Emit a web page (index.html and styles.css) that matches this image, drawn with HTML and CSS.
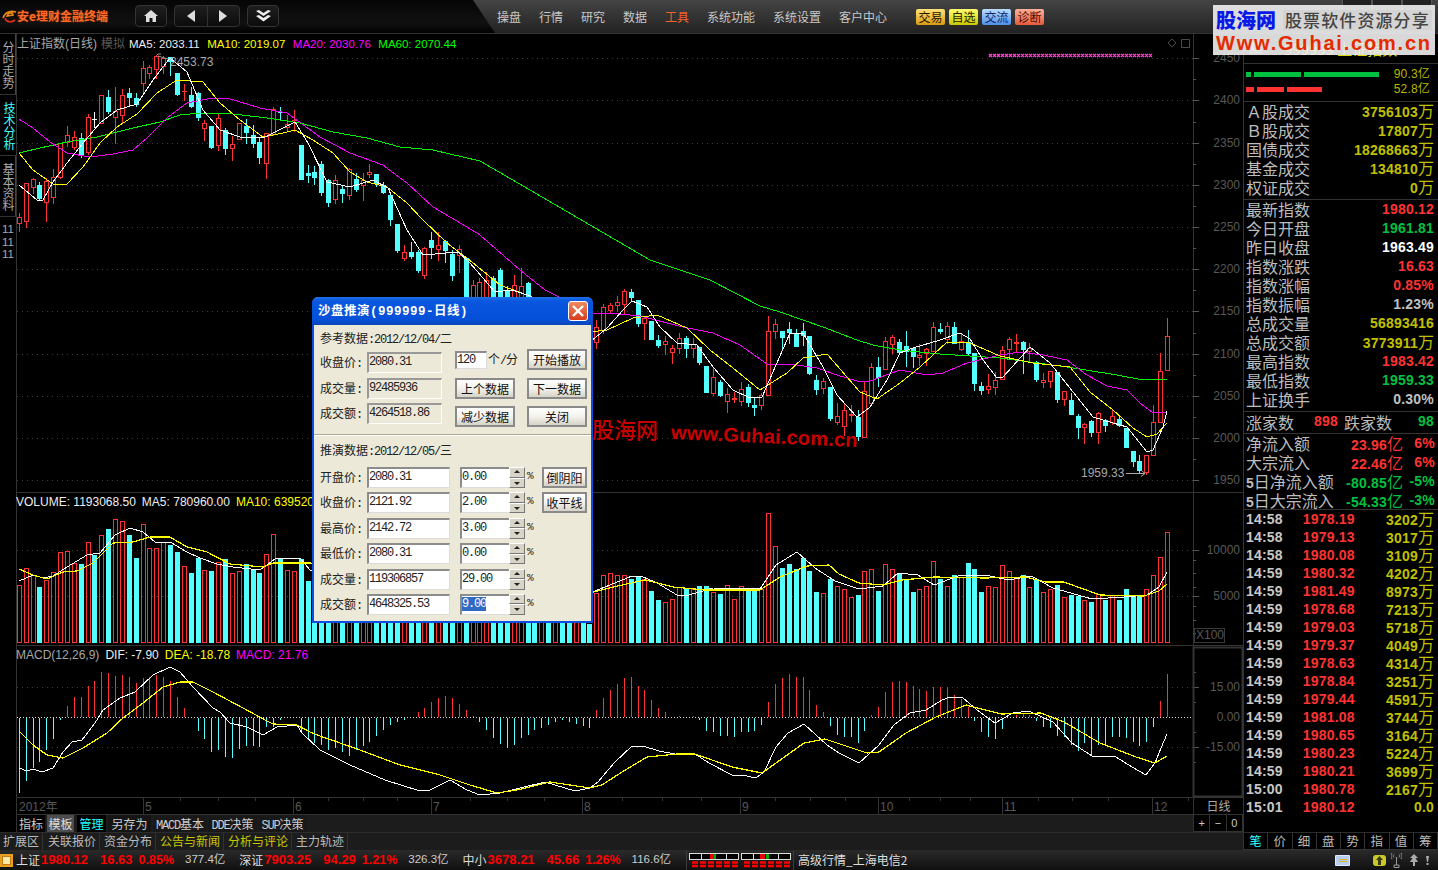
FILE: index.html
```html
<!DOCTYPE html>
<html lang="zh-CN">
<head>
<meta charset="utf-8">
<title>安e理财金融终端</title>
<link rel="stylesheet" href="styles.css">
</head>
<body>
<div class="app">
  <header class="topbar">
    <div class="brand">
      <svg class="logo-mark" viewBox="0 0 15 15" width="15" height="15"><path d="M1 9 C3 3 9 1 14 3 C10 2 6 4 5 7 L11 6 C11 4 9 4 8 4" fill="none" stroke="#e8861a" stroke-width="1.6"/><path d="M3 9 C4 13 9 14 13 11" fill="none" stroke="#e0301a" stroke-width="1.6"/></svg>
      <span class="logo-text">安e理财金融终端</span>
      <div class="tool-btn home"><svg viewBox="0 0 14 12" width="14" height="12"><path d="M7 0 L14 6 L12 6 L12 12 L8.5 12 L8.5 8 L5.5 8 L5.5 12 L2 12 L2 6 L0 6 Z" fill="#ddd"/></svg></div>
      <div class="tool-btn pager">
        <span class="pager-cell"><svg viewBox="0 0 8 12" width="8" height="12"><path d="M8 0 V12 L0 6 Z" fill="#ddd"/></svg></span>
        <span class="pager-cell"><svg viewBox="0 0 8 12" width="8" height="12"><path d="M0 0 V12 L8 6 Z" fill="#ddd"/></svg></span>
      </div>
      <div class="tool-btn chev"><svg viewBox="0 0 15 12" width="15" height="12"><path d="M0 1 L3 0 L7.5 3 L12 0 L15 1 L7.5 6 Z M0 6 L3 5 L7.5 8 L12 5 L15 6 L7.5 11.5 Z" fill="#eee"/></svg></div>
    </div>
    <nav class="menu">
      <span>操盘</span><span>行情</span><span>研究</span><span>数据</span><span class="menu-on">工具</span><span>系统功能</span><span>系统设置</span><span>客户中心</span>
    </nav>
    <div class="pills">
      <span class="pill pill-trade">交易</span><span class="pill pill-own">自选</span><span class="pill pill-talk">交流</span><span class="pill pill-diag">诊断</span>
    </div>
    <div class="win-btns"><i></i><i></i><i></i></div>
  </header>

  <main class="main">
    <aside class="side">
      <div class="side-tab">分时走势</div>
      <div class="side-tab side-on">技术分析</div>
      <div class="side-tab">基本资料</div>
      <div class="side-nums"><span>11</span><span>11</span><span>11</span></div>
    </aside>

    <section class="charts">
      <div class="panel panel-price">
        <svg id="price" class="plot" width="1226" height="458" viewBox="17 34 1226 458"></svg>
        <div class="legend legend-price">
          <span class="c-gray">上证指数(日线)</span><span class="c-dim">模拟</span>
          <span class="c-white gap">MA5: 2033.11</span><span class="c-yellow gap">MA10: 2019.07</span><span class="c-mag gap">MA20: 2030.76</span><span class="c-green gap">MA60: 2070.44</span>
        </div>
      </div>
      <div class="panel panel-vol">
        <svg id="vol" class="plot" width="1226" height="152" viewBox="17 493 1226 152"></svg>
        <div class="legend legend-low"><span class="c-white">VOLUME: 1193068.50</span><span class="c-white">MA5: 780960.00</span><span class="c-yellow">MA10: 639520.00</span></div>
      </div>
      <div class="panel panel-macd">
        <svg id="macd" class="plot" width="1226" height="151" viewBox="17 646 1226 151"></svg>
        <div class="legend legend-low"><span class="c-gray">MACD(12,26,9)</span><span class="c-white">DIF: -7.90</span><span class="c-yellow">DEA: -18.78</span><span class="c-mag">MACD: 21.76</span></div>
      </div>
      <div class="date-row">
        <svg id="dates" class="plot" width="1176" height="16" viewBox="17 798 1176 16"></svg>
        <div class="axis-cell">日线</div>
      </div>
      <div class="tool-row">
        <div class="tpl-tabs">
          <span class="tpl t-ind">指标</span><span class="tpl t-tpl">模板</span><span class="tpl t-mgr">管理</span><span class="tpl t-save">另存为</span><span class="tpl t-macd"><i class="latin">MACD</i>基本</span><span class="tpl t-dde"><i class="latin">DDE</i>决策</span><span class="tpl t-dde"><i class="latin">SUP</i>决策</span>
        </div>
        <div class="zoom-cells"><span>+</span><span>−</span><span>0</span></div>
      </div>
    </section>

    <aside class="quote">
      <div class="q-sec q-head"><span class="q-g">G</span><span class="q-title">999999 上证指数</span></div>
      <div class="q-sec q-bars">
        <div class="bar-line"><span class="seg seg-g w5"></span><span class="seg seg-g w47"></span><span class="seg seg-g w75"></span><span class="bar-val">90.3亿</span></div>
        <div class="bar-line"><span class="seg seg-r w8"></span><span class="seg seg-r w27"></span><span class="seg seg-r w35"></span><span class="bar-val">52.8亿</span></div>
      </div>
      <div class="q-sec q-a">
        <div class="q-row"><span>Ａ股成交</span><b class="yl">3756103<em>万</em></b></div>
        <div class="q-row"><span>Ｂ股成交</span><b class="yl">17807<em>万</em></b></div>
        <div class="q-row"><span>国债成交</span><b class="yl">18268663<em>万</em></b></div>
        <div class="q-row"><span>基金成交</span><b class="yl">134810<em>万</em></b></div>
        <div class="q-row"><span>权证成交</span><b class="yl">0<em>万</em></b></div>
      </div>
      <div class="q-sec q-b">
        <div class="q-row"><span>最新指数</span><b class="rd">1980.12</b></div>
        <div class="q-row"><span>今日开盘</span><b class="gn">1961.81</b></div>
        <div class="q-row"><span>昨日收盘</span><b class="wh">1963.49</b></div>
        <div class="q-row"><span>指数涨跌</span><b class="rd">16.63</b></div>
        <div class="q-row"><span>指数涨幅</span><b class="rd">0.85%</b></div>
        <div class="q-row"><span>指数振幅</span><b class="lg">1.23%</b></div>
        <div class="q-row"><span>总成交量</span><b class="yl">56893416</b></div>
        <div class="q-row"><span>总成交额</span><b class="yl">3773911<em>万</em></b></div>
        <div class="q-row"><span>最高指数</span><b class="rd">1983.42</b></div>
        <div class="q-row"><span>最低指数</span><b class="gn">1959.33</b></div>
        <div class="q-row"><span>上证换手</span><b class="lg">0.30%</b></div>
      </div>
      <div class="q-sec q-c">
        <span>涨家数</span><b class="rd up-n">898</b><span class="down-l">跌家数</span><b class="gn down-n">98</b>
      </div>
      <div class="q-sec q-d">
        <div class="q-flow"><span>净流入额</span><b class="rd">23.96<em>亿</em></b><b class="rd pct">6%</b></div>
        <div class="q-flow"><span>大宗流入</span><b class="rd">22.46<em>亿</em></b><b class="rd pct">6%</b></div>
        <div class="q-flow"><span><i>5</i>日净流入额</span><b class="gn">-80.85<em>亿</em></b><b class="gn pct">-5%</b></div>
        <div class="q-flow"><span><i>5</i>日大宗流入</span><b class="gn">-54.33<em>亿</em></b><b class="gn pct">-3%</b></div>
      </div>
      <div class="q-ticks">
        <div class="tick"><b>14:58</b><b class="rd">1978.19</b><b class="yl">3202<em>万</em></b></div>
        <div class="tick"><b>14:58</b><b class="rd">1979.13</b><b class="yl">3017<em>万</em></b></div>
        <div class="tick"><b>14:58</b><b class="rd">1980.08</b><b class="yl">3109<em>万</em></b></div>
        <div class="tick"><b>14:59</b><b class="rd">1980.32</b><b class="yl">4202<em>万</em></b></div>
        <div class="tick"><b>14:59</b><b class="rd">1981.49</b><b class="yl">8973<em>万</em></b></div>
        <div class="tick"><b>14:59</b><b class="rd">1978.68</b><b class="yl">7213<em>万</em></b></div>
        <div class="tick"><b>14:59</b><b class="rd">1979.03</b><b class="yl">5718<em>万</em></b></div>
        <div class="tick"><b>14:59</b><b class="rd">1979.37</b><b class="yl">4049<em>万</em></b></div>
        <div class="tick"><b>14:59</b><b class="rd">1978.63</b><b class="yl">4314<em>万</em></b></div>
        <div class="tick"><b>14:59</b><b class="rd">1978.84</b><b class="yl">3251<em>万</em></b></div>
        <div class="tick"><b>14:59</b><b class="rd">1979.44</b><b class="yl">4591<em>万</em></b></div>
        <div class="tick"><b>14:59</b><b class="rd">1981.08</b><b class="yl">3744<em>万</em></b></div>
        <div class="tick"><b>14:59</b><b class="rd">1980.65</b><b class="yl">3164<em>万</em></b></div>
        <div class="tick"><b>14:59</b><b class="rd">1980.23</b><b class="yl">5224<em>万</em></b></div>
        <div class="tick"><b>14:59</b><b class="rd">1980.21</b><b class="yl">3699<em>万</em></b></div>
        <div class="tick"><b>15:00</b><b class="rd">1980.78</b><b class="yl">2167<em>万</em></b></div>
        <div class="tick"><b>15:01</b><b class="rd">1980.12</b><b class="yl">0.0</b></div>
      </div>
    </aside>
  </main>

  <div class="ext-row">
    <div class="ext-tabs">
      <span class="ext">扩展区</span><span class="ext">关联报价</span><span class="ext">资金分布</span><span class="ext ext-y">公告与新闻</span><span class="ext ext-y">分析与评论</span><span class="ext">主力轨迹</span>
    </div>
    <div class="q-tabs"><span class="q-tab-on">笔</span><span>价</span><span>细</span><span>盘</span><span>势</span><span>指</span><span>值</span><span>筹</span></div>
  </div>

  <footer class="status">
    <span class="st-icon"></span>
    <div class="idx"><span class="idx-name">上证</span><b class="idx-val">1980.12</b><b class="idx-chg">16.63</b><b class="idx-pct">0.85%</b><span class="idx-amt">377.4亿</span></div>
    <div class="idx"><span class="idx-name">深证</span><b class="idx-val">7903.25</b><b class="idx-chg">94.29</b><b class="idx-pct">1.21%</b><span class="idx-amt">326.3亿</span></div>
    <div class="idx"><span class="idx-name">中小</span><b class="idx-val">3678.21</b><b class="idx-chg">45.66</b><b class="idx-pct">1.26%</b><span class="idx-amt">116.6亿</span></div>
    <div class="strength">
      <svg viewBox="0 0 50 15" width="50" height="15"><rect x=".5" y=".5" width="49" height="6" fill="#000" stroke="#ddd"/><path d="M12.5 0V7M25.5 0V7M37.5 0V7" stroke="#ddd"/><rect x="21" y="1" width="4" height="5" fill="#e00"/><rect x="25" y="1" width="2" height="5" fill="#0a0"/><path d="M3 9.5H50M3 13H50" stroke="#f00" stroke-width="2.5" stroke-dasharray="6 2"/></svg>
      <svg viewBox="0 0 50 15" width="50" height="15"><rect x=".5" y=".5" width="49" height="6" fill="#000" stroke="#ddd"/><path d="M12.5 0V7M25.5 0V7M37.5 0V7" stroke="#ddd"/><rect x="19" y="1" width="5" height="5" fill="#e00"/><rect x="25" y="1" width="3" height="5" fill="#0a0"/><path d="M3 9.5H50M3 13H50" stroke="#f00" stroke-width="2.5" stroke-dasharray="6 2"/></svg>
    </div>
    <span class="st-server">高级行情_上海电信2</span>
    <div class="st-icons">
      <svg class="i-mail" viewBox="0 0 15 11" width="15" height="11"><rect width="15" height="11" rx="1" fill="#dfeaff"/><rect x="1" y="1" width="13" height="9" fill="#b8cdf0"/><rect x="4" y="4" width="8" height="1" fill="#d8b820"/><rect x="4" y="6" width="8" height="1" fill="#d8b820"/></svg>
      <svg class="i-coin" viewBox="0 0 13 11" width="13" height="11"><rect width="13" height="11" rx="3" fill="#c8c828"/><path d="M6.5 1 L10 5 H8 V10 H5 V5 H3 Z" fill="#3a3a10"/></svg>
      <svg class="i-ant" viewBox="0 0 11 16" width="11" height="16"><path d="M5.5 5V13M3 13H8V15.5H3ZM1 1C-.5 3 -.5 5 1 7M10 1C11.500 3 11.500 5 10 7M3 2.500C2 3.500 2 4.500 3 5.500M8 2.500C9 3.500 9 4.500 8 5.500" fill="none" stroke="#999"/></svg>
      <svg class="i-tree" viewBox="0 0 8 12" width="8" height="12"><path d="M4 0 L8 4 H5.500 L8 8 H5 V12 H3 V8 H0 L2.500 4 H0 Z" fill="#aaa"/></svg>
      <svg class="i-bang" viewBox="0 0 5 9" width="5" height="9"><path d="M1 0H4L3 6H2ZM1.500 7H3.500V9H1.500Z" fill="#aaa"/></svg>
    </div>
  </footer>

  <div class="wm-center"><span class="wm-cn">股海网</span><span class="wm-en">www.Guhai.com.cn</span></div>

  <div class="watermark">
    <div class="wm-top"><span class="wm-blue">股海网</span><span class="wm-slogan">股票软件资源分享</span></div>
    <div class="wm-url">Www.Guhai.com.cn</div>
  </div>

  <div class="dialog">
    <div class="dlg-title"><span>沙盘推演(999999-日线)</span><span class="dlg-close"><svg viewBox="0 0 12 12" width="12" height="12"><path d="M1 1L11 11M11 1L1 11" stroke="#fff" stroke-width="2.400"/></svg></span></div>
    <div class="dlg-body">
      <div class="dlg-caption">参考数据<span class="mono">:2012/12/04/</span>二</div>
      <div class="dlg-ref">
        <span class="lbl">收盘价<span class="mono">:</span></span><span class="field field-off w75 mono">2080.31</span>
        <div class="rate"><span class="field field-on w32 mono">120</span><span>个<span class="mono">/</span>分</span></div>
        <span class="btn btn-top">开始播放</span>
        <span class="lbl">成交量<span class="mono">:</span></span><span class="field field-off w75 mono">92485936</span>
        <span class="btn">上个数据</span><span class="btn">下一数据</span>
        <span class="lbl">成交额<span class="mono">:</span></span><span class="field field-off w75 mono">4264518.86</span>
        <span class="btn btn-low">减少数据</span><span class="btn btn-low">关闭</span>
      </div>
      <hr class="dlg-sep">
      <div class="dlg-caption dlg-caption-2">推演数据<span class="mono">:2012/12/05/</span>三</div>
      <div class="dlg-sim">
        <span class="lbl">开盘价<span class="mono">:</span></span><span class="field field-on w83 mono">2080.31</span>
        <div class="spin"><span class="field field-on w49 mono">0.00</span><span class="spinner"><i></i><i class="dn"></i></span></div><span class="pc">%</span><span class="btn btn-s">倒阴阳</span>
        <span class="lbl">收盘价<span class="mono">:</span></span><span class="field field-on w83 mono">2121.92</span>
        <div class="spin"><span class="field field-on w49 mono">2.00</span><span class="spinner"><i></i><i class="dn"></i></span></div><span class="pc">%</span><span class="btn btn-s">收平线</span>
        <span class="lbl">最高价<span class="mono">:</span></span><span class="field field-on w83 mono">2142.72</span>
        <div class="spin"><span class="field field-on w49 mono">3.00</span><span class="spinner"><i></i><i class="dn"></i></span></div><span class="pc">%</span><span></span>
        <span class="lbl">最低价<span class="mono">:</span></span><span class="field field-on w83 mono">2080.31</span>
        <div class="spin"><span class="field field-on w49 mono">0.00</span><span class="spinner"><i></i><i class="dn"></i></span></div><span class="pc">%</span><span></span>
        <span class="lbl">成交量<span class="mono">:</span></span><span class="field field-on w83 mono">119306857</span>
        <div class="spin"><span class="field field-on w49 mono">29.00</span><span class="spinner"><i></i><i class="dn"></i></span></div><span class="pc">%</span><span></span>
        <span class="lbl">成交额<span class="mono">:</span></span><span class="field field-on w83 mono">4648325.53</span>
        <div class="spin"><span class="field field-on w49 mono"><span class="sel">9.00</span></span><span class="spinner"><i></i><i class="dn"></i></span></div><span class="pc">%</span><span></span>
      </div>
    </div>
  </div>
</div>
<script src="chart.js"></script>
</body>
</html>
```

FILE: styles.css
```css
* { box-sizing: border-box; }
html, body { margin: 0; padding: 0; background: #000; }
body { font: 12px/1.2 "Noto Sans CJK SC", "Liberation Sans", sans-serif; color: #bbb; overflow: hidden; }
em, i { font-style: normal; }

.app { position: relative; width: 1438px; height: 870px; display: flex; flex-direction: column; background: #000; }

/* top bar */
.topbar { height: 34px; flex: none; display: flex; align-items: center; border-bottom: 1px solid #333; background: linear-gradient(#444, #3a3a3a 30%, #222); }
.brand { width: 495px; height: 33px; flex: none; display: flex; align-items: center; padding: 0 0 1px 2px; background: linear-gradient(#050505, #111 70%, #000); clip-path: polygon(0 0, 473px 0, 495px 100%, 0 100%); }
.logo-mark { flex: none; }
.logo-text { width: 118px; font-size: 12px; font-weight: 700; color: #ff6a26; text-shadow: 0 0 2px #7a2a00; }
.tool-btn { height: 22px; display: flex; align-items: center; justify-content: center; border: 1px solid #333; border-radius: 4px; background: linear-gradient(#1e1e1e, #0c0c0c); }
.home { width: 32px; }
.pager { width: 66px; margin-left: 7px; }
.pager-cell { flex: 1; height: 100%; display: flex; align-items: center; justify-content: center; }
.pager-cell + .pager-cell { border-left: 1px solid #333; }
.chev { width: 32px; margin-left: 7px; }
.menu { display: flex; gap: 18px; margin-left: 2px; color: #c8c8c8; }
.menu span { font-size: 12px; line-height: 16px; }
.menu .menu-on { color: #f4622a; }
.pills { display: flex; gap: 4px; margin-left: 29px; }
.pill { width: 29px; height: 16px; border-radius: 2px; font-size: 12px; line-height: 16px; text-align: center; color: #2a1a00; }
.pill-trade { background: linear-gradient(#ffe27a, #d99a10); }
.pill-own { background: linear-gradient(#ffff70, #c8c800); }
.pill-talk { background: linear-gradient(#bcdcff, #4f8fe8); color: #0d2a66; }
.pill-diag { background: linear-gradient(#ffb09a, #e85a3c); color: #4a0d00; }
.win-btns { display: flex; margin-left: auto; height: 100%; padding-right: 6px; }
.win-btns i { width: 30px; height: 24px; border: 1px solid #555; border-top: 0; background: #222; }

/* main */
.main { height: 798px; flex: none; display: flex; }
.side { width: 16px; flex: none; display: flex; flex-direction: column; }
.side-tab { height: 61px; padding: 7px 0 0 1px; writing-mode: vertical-rl; font-size: 12px; line-height: 14px; color: #aaa; border-right: 1px solid #444; border-bottom: 1px solid #333; }
.side-on { color: #4ff; border-right: 0; }
.side-nums { margin-top: 6px; display: flex; flex-direction: column; align-items: center; font: 11.5px/12.500px "Liberation Sans", sans-serif; color: #aaa; }

.charts { width: 1227px; flex: none; display: flex; flex-direction: column; border-left: 1px solid #333; }
.panel { position: relative; border-bottom: 1px solid #333; }
.panel-price { height: 459px; }
.panel-vol { height: 153px; }
.panel-macd { height: 152px; }
.plot { display: block; }
.legend { position: absolute; left: 0; display: flex; white-space: nowrap; font: 12px/16px "Liberation Sans", "Noto Sans CJK SC", sans-serif; }
.legend-price { top: 2px; font-size: 11.5px; gap: 4px; }
.legend-price span:first-child { font-size: 12px; }
.legend-price span:nth-child(2) { font-size: 12px; }
.legend-price .gap + .gap { margin-left: 3.500px; }
.legend-low { top: 1px; gap: 6px; margin-left: -1px; }
.c-white { color: #eee; }
.c-gray { color: #a8a8a8; }
.c-dim { color: #5a5a5a; }
.c-yellow { color: #ff0; }
.c-mag { color: #f0f; }
.c-green { color: #0f0; }

.date-row { height: 17px; flex: none; display: flex; border-bottom: 1px solid #333; }
.axis-cell { width: 50px; border-left: 1px solid #333; text-align: center; font-size: 12px; line-height: 16px; color: #aaa; }
.tool-row { height: 17px; flex: none; display: flex; background: #1c1c1c; }
.tpl-tabs { flex: 1; display: flex; }
.tpl { flex: none; height: 17px; font-size: 12px; line-height: 17px; text-align: center; white-space: nowrap; background: #000; color: #ccc; }
.latin { font: 12px/17px "Liberation Mono", monospace; letter-spacing: -1.200px; }
.t-ind { width: 28px; }
.t-tpl { width: 27px; margin-left: 2px; background: #4d4d4d; color: #ddd; }
.t-mgr { width: 29px; margin-left: 3px; color: #2ff; }
.t-save { width: 43px; margin-left: 2px; background: #151515; }
.t-macd { width: 54px; margin-left: 2px; background: #191919; }
.t-dde { width: 49px; margin-left: 1px; background: #191919; }
.zoom-cells { width: 50px; display: flex; background: #000; border-left: 1px solid #333; }
.zoom-cells span { flex: 1; border-right: 1px solid #333; border-bottom: 1px solid #333; text-align: center; font: 11px/16px "Liberation Sans", sans-serif; color: #ccc; }

/* quote */
.quote { width: 195px; flex: none; display: flex; flex-direction: column; border-left: 1px solid #333; padding-left: 2px; font-size: 16px; color: #bdbdbd; }
.q-sec { border-bottom: 1px solid #333; margin-left: -2px; padding-left: 2px; flex: none; }
.q-head { height: 30px; padding-top: 6px; display: flex; align-items: flex-start; line-height: 18px; color: #d8d800; }
.q-g { margin-left: 3px; width: 14px; text-align: center; background: #555; color: #ccc; font: 12px/14px "Liberation Sans", sans-serif; }
.q-title { margin-left: 21px; font-size: 15px; }
.q-bars { height: 38px; padding-top: 3px; }
.bar-line { display: flex; align-items: center; height: 15px; }
.seg { height: 5px; margin-right: 3px; }
.seg-g { background: #00c040; }
.seg-r { background: #ff3232; }
.w5 { width: 5px; }
.w47 { width: 47px; }
.w75 { width: 75px; }
.w8 { width: 8px; }
.w27 { width: 27px; }
.w35 { width: 35px; }
.bar-val { margin-left: auto; padding-right: 8px; font: 12px/15px "Liberation Sans", "Noto Sans CJK SC", sans-serif; color: #b8b800; letter-spacing: .2px; }
.q-a { height: 98px; }
.q-b { height: 212px; }
.q-row { height: 19px; display: flex; justify-content: space-between; align-items: center; padding-right: 4px; line-height: 19px; }
.q-row b, .q-c b, .q-flow b, .tick b { font: 700 14px/19px "Liberation Sans", sans-serif; letter-spacing: .2px; }
b em { font: 400 16px/19px "Noto Sans CJK SC", sans-serif; letter-spacing: 0; }
.yl { color: #c0c000; }
.rd { color: #ff3232; }
.gn { color: #00c040; }
.wh { color: #fff; }
.lg { color: #c0c0c0; }
.q-c { height: 22px; display: flex; align-items: flex-start; line-height: 20px; padding-right: 4px; }
.q-c .up-n { margin-left: 20px; }
.q-c .down-l { margin-left: 6px; }
.q-c .down-n { margin-left: auto; }
.q-d { height: 76px; }
.q-flow { height: 19px; display: grid; grid-template-columns: 1fr auto 32px; align-items: start; line-height: 19px; padding-right: 3px; }
.q-flow span i { font: 700 14px/19px "Liberation Sans", sans-serif; }
.q-flow .pct { text-align: right; }
.q-ticks { flex: 1; }
.tick { height: 18px; display: flex; align-items: center; padding-right: 4px; }
.tick b { line-height: 18px; color: #c8c8c8; }
.tick b em { line-height: 18px; }
.tick b.rd { color: #ff3232; margin-left: 20px; }
.tick b.yl { color: #c0c000; margin-left: auto; }

/* ext row */
.ext-row { height: 18px; flex: none; display: flex; background: #1c1c1c; border-top: 1px solid #2c2c2c; }
.ext-tabs { flex: 1; display: flex; }
.ext { height: 17px; padding: 0 3px 0 4px; font-size: 12px; line-height: 16px; color: #bbb; border-right: 1px solid #333; }
.ext:first-child { padding-left: 3px; }
.ext:nth-child(2) { padding-left: 5px; }
.ext-y { color: #c8c800; }
.q-tabs { width: 195px; flex: none; display: flex; background: #000; border-left: 1px solid #333; border-bottom: 1px solid #333; }
.q-tabs span { flex: 1; border-right: 1px solid #333; text-align: center; font-size: 12.500px; line-height: 16px; color: #bbb; }
.q-tabs .q-tab-on { color: #3ff; }

/* status */
.status { height: 20px; flex: none; display: flex; align-items: center; background: linear-gradient(#2a2a2a, #101010); white-space: nowrap; }
.st-icon { width: 13px; height: 13px; margin-right: 3px; border: 2px solid #e8a020; background: #ffe9a8; box-shadow: inset 0 0 0 1px #c47c10; }
.idx { display: flex; align-items: center; margin-right: 14px; }
.idx-name { font-size: 12px; color: #ddd; }
.idx-val, .idx-chg, .idx-pct { font: 700 13px/20px "Liberation Sans", sans-serif; color: #f00; }
.idx-val { margin-left: 1px; }
.idx-chg { margin-left: 12px; }
.idx-pct { margin-left: 6px; font-size: 12.500px; }
.idx-amt { margin-left: 11px; font-size: 11.500px; font-family: "Liberation Sans", "Noto Sans CJK SC", sans-serif; color: #ccc; }
.strength { display: flex; gap: 2px; align-items: center; height: 20px; border-left: 1px solid #3a3a3a; border-right: 1px solid #3a3a3a; padding: 0 2px; margin-left: 1px; }
.st-server { margin-left: 4px; font-size: 12px; color: #ddd; }
.st-icons { margin-left: auto; display: flex; align-items: center; padding-right: 8px; }
.i-coin { margin-left: 23px; }
.i-ant { margin-left: 5px; }
.i-tree { margin-left: 8px; }
.i-bang { margin-left: 7px; }

/* overlays */
.watermark { position: absolute; left: 1213px; top: 5px; width: 222px; height: 50px; padding: 3px 3px 0 3px; background: rgba(240,240,240,.9); }
.wm-top { display: flex; align-items: center; height: 24px; }
.wm-blue { font-size: 20px; line-height: 24px; font-weight: 900; color: #0a18e8; }
.wm-slogan { margin-left: 7px; padding: 0 2px; font-size: 17px; line-height: 20px; font-weight: 500; color: #444; background: #d4d4d4; letter-spacing: 1.100px; white-space: nowrap; }
.wm-url { font: 700 20px/22px "Liberation Sans", sans-serif; color: #e62a00; letter-spacing: 1.800px; white-space: nowrap; }

.wm-center { position: absolute; left: 592px; top: 413px; display: flex; align-items: flex-start; white-space: nowrap; color: #c80000; }
.wm-cn { font-size: 22px; line-height: 30px; font-weight: 500; }
.wm-en { margin-left: 13px; margin-top: 8px; font: 700 20px/22px "Liberation Sans", sans-serif; letter-spacing: .2px; transform: rotate(2.5deg); transform-origin: left center; }

.dialog { position: absolute; left: 312px; top: 297px; width: 281px; height: 326px; border: 2px solid #0a4fe0; border-top: 0; border-radius: 6px 6px 0 0; background: #ece9d8; color: #222; }
.dlg-title { height: 28px; margin: 0 -2px; padding: 2px 5px 0 6px; display: flex; align-items: center; justify-content: space-between; border-radius: 6px 6px 0 0; background: linear-gradient(#1c6fe8, #0a56de 15%, #0550d8 80%, #0b46b8); color: #fff; font: 700 12.500px/16px "Liberation Mono", "Noto Sans CJK SC", monospace; letter-spacing: .5px; }
.dlg-close { width: 20px; height: 20px; margin-top: -2px; display: flex; align-items: center; justify-content: center; border: 1px solid #fff; border-radius: 3px; background: linear-gradient(#f08a60, #d83c1c); }
.dlg-body { padding: 0 0 0 6px; font-size: 12px; }
.mono { font: 12px/15px "Liberation Mono", monospace; letter-spacing: -1.200px; }
.dlg-caption { height: 27px; line-height: 26px; white-space: nowrap; }
.dlg-ref { display: grid; grid-template-columns: 47px 88px 72px 60px; grid-template-rows: 26px 25px 21px; }
.lbl { line-height: 20px; white-space: nowrap; }
.field { display: block; height: 21px; padding: 1px 0 0 0; line-height: 15px; white-space: nowrap; border: 1px solid; border-width: 2px 1px 1px 2px; }
.field-on { background: #fff; border-color: #8c8c8c #dcdcdc #dcdcdc #8c8c8c; }
.field-off { background: #ece9d8; border-color: #999 #fff #fff #999; }
.w75 { width: 75px; }
.w32 { width: 32px; }
.w83 { width: 83px; }
.w49 { width: 49px; }
.rate { display: flex; align-items: center; height: 18px; gap: 1px; margin-top: -1px; white-space: nowrap; }
.rate .field { height: 18px; padding-top: 0; }
.btn { display: block; width: 60px; height: 21px; border: 2px solid #8a8a8a; background: linear-gradient(#fff, #f3f2ec 50%, #d6d3c6); text-align: center; line-height: 17px; white-space: nowrap; color: #111; }
.btn-top { margin-top: -3px; }
.btn-low { margin-top: 3px; }
.btn-s { width: 45px; }
.dlg-sep { margin: 10px 0 1px -6px; border: 0; border-top: 1px solid #aca899; border-bottom: 1px solid #fff; }
.dlg-caption-2 { height: 30px; line-height: 26px; }
.dlg-sim { display: grid; grid-template-columns: 47px 93px 67px 15px 45px; grid-auto-rows: 25.400px; }
.spin { display: flex; height: 21px; background: #fff; width: 65px; }
.spin .field { border-right: 0; border-bottom: 1px solid #dcdcdc; }
.spinner { width: 16px; display: flex; flex-direction: column; }
.spinner i { flex: 1; position: relative; background: #d8d5c8; border: 1px solid; border-color: #fff #777 #777 #fff; }
.spinner i::after { content: ""; position: absolute; left: 4px; top: 2px; border: 3px solid transparent; border-top: 0; border-bottom: 3px solid #222; }
.spinner i.dn::after { top: 3px; border-bottom: 0; border-top: 3px solid #222; }
.sel { background: #316ac5; color: #fff; }
.pc { font: 11px/18px "Liberation Mono", monospace; }

/* svg text */
.axis-text { fill: #585858; font: 12px "Liberation Sans", sans-serif; }
.date-text { fill: #585858; font: 12px "Liberation Sans", "Noto Sans CJK SC", sans-serif; }
.mark-text { fill: #a8a8a8; font: 12px "Liberation Sans", sans-serif; }
```

FILE: chart.js
```js
var NS = 'http://www.w3.org/2000/svg';
var RED = '#ff3232', CYAN = '#54ffff';
var xAt = function (i) { return Math.floor(19.33 + 6.875 * i); };

// colour (0 red, 1 cyan, 2 white), body top, body bottom, high, low
var candles = [
[0,217,223,213,231],[0,183,221,183,227],[0,179,187,178,193],[1,185,198,182,200],[0,181,202,178,221],
[0,177,197,169,203],[0,143,177,143,178],[0,135,142,126,146],[0,137,147,131,149],[1,138,155,133,157],
[0,117,152,114,154],[2,119,119,112,127],[0,95,123,95,123],[1,97,111,90,113],[0,111,117,87,143],
[0,95,115,89,122],[1,93,97,88,106],[1,98,104,93,106],[0,68,83,61,93],[0,67,73,65,78],
[0,56,69,55,78],[0,58,66,56,73],[1,57,61,57,75],[1,73,94,73,95],[0,91,91,84,100],
[1,95,106,87,107],[1,93,117,92,120],[0,123,128,120,140],[1,126,147,126,148],[0,118,145,114,150],
[1,130,148,128,154],[0,144,148,136,160],[0,123,139,123,139],[1,126,132,119,143],[1,135,143,125,147],
[1,142,157,138,163],[0,133,163,133,178],[0,109,134,107,135],[1,112,112,107,119],[0,124,127,115,131],
[0,120,120,110,131],[1,145,179,145,179],[1,173,175,165,182],[1,172,177,166,184],[1,164,192,161,195],
[1,180,202,179,206],[0,180,199,175,203],[1,189,193,185,202],[0,169,195,168,199],[1,179,189,173,191],
[0,180,185,173,200],[0,172,174,164,177],[1,174,183,174,186],[1,185,192,182,193],[1,195,219,195,225],
[1,224,250,224,252],[0,252,258,245,260],[1,252,256,242,258],[1,252,270,250,272],[0,248,275,247,278],
[1,240,247,232,258],[0,245,249,232,260],[1,241,250,240,262],[1,254,275,250,280],[0,249,255,245,272],
[1,258,297,258,300],[0,285,300,280,310],[0,282,300,278,310],[0,280,300,272,310],[1,278,300,276,310],
[1,270,300,268,310],[1,290,305,286,310],[0,285,305,275,310],[0,286,305,268,310],[1,283,310,282,312],
[1,320,340,315,345],[0,320,340,315,345],[1,320,340,315,345],[0,320,340,315,345],[1,320,340,315,345],
[1,320,340,315,345],[0,320,340,315,345],[1,320,340,315,345],[1,330,345,320,350],
[0,327,342,320,348],[0,307,330,304,333],[0,305,310,303,313],[0,302,305,296,311],[0,291,304,289,314],
[1,292,297,289,300],[1,300,323,300,326],[0,318,323,316,339],[1,321,339,321,339],[1,340,345,335,347],
[0,341,344,336,354],[0,348,352,345,363],[0,338,348,333,353],[1,338,348,336,357],[0,344,348,338,357],
[1,347,362,347,364],[1,366,392,366,392],[0,377,393,367,395],[1,382,395,380,396],[0,394,401,388,412],
[0,398,399,392,402],[0,389,401,382,405],[1,387,402,384,406],[1,405,407,397,415],[0,395,405,393,409],
[0,331,395,316,395],[0,324,331,319,338],[1,331,337,331,349],[1,329,332,322,343],[1,334,346,329,346],
[1,331,335,323,345],[1,336,373,336,374],[1,380,389,375,394],[0,381,388,378,393],[1,387,418,387,420],
[0,416,422,403,424],[0,410,426,404,435],[0,414,415,405,421],[1,417,436,410,440],[0,391,437,382,437],
[0,367,403,363,405],[1,367,377,357,386],[0,341,369,337,369],[0,337,344,335,353],[1,342,352,339,353],
[1,346,351,331,366],[1,348,356,347,367],[0,355,357,344,365],[0,349,353,348,365],[0,327,351,322,351],
[1,329,331,323,333],[0,326,339,322,343],[1,327,343,322,343],[0,341,349,333,350],[1,342,353,330,354],
[1,353,383,353,390],[1,386,390,382,394],[0,386,389,374,393],[0,380,387,372,394],[0,350,379,346,379],
[0,339,349,337,358],[0,342,343,334,352],[1,342,349,341,373],[0,348,351,343,360],[1,362,379,361,381],
[0,380,382,373,387],[0,371,381,371,387],[1,372,399,372,402],[0,391,399,391,405],[1,400,414,393,414],
[1,416,427,414,438],[0,424,427,423,443],[1,421,432,420,436],[0,413,432,412,443],[1,420,425,419,431],
[0,416,422,409,424],[1,419,425,415,426],[1,428,447,428,447],[1,451,461,451,466],[1,461,470,455,473],
[0,455,472,455,474],[0,422,455,405,455],[0,371,422,353,422],[0,336,370,318,370]
];

var volumeTops = [585,568,575,587,580,572,552,551,563,564,542,555,535,529,519,521,535,558,524,548,548,542,545,552,566,573,558,570,571,562,559,573,571,564,569,573,554,534,558,570,571,559,581,623,
600,600,600,600,600,600,600,600,600,600,600,600,600,600,600,600,600,600,600,600,600,600,600,600,600,600,600,600,600,600,600,600,600,600,600,600,600,600,600,624,
593,575,573,575,575,579,576,579,591,600,602,599,587,588,589,586,586,592,594,585,599,586,589,589,589,513,546,568,564,569,558,571,592,593,579,586,589,597,595,571,569,591,564,569,573,579,592,589,586,561,579,586,575,577,563,569,592,586,587,565,571,577,575,587,579,592,589,585,597,595,596,600,602,594,600,595,600,589,595,595,589,575,557,532];

// y of each MACD histogram bar's tip; the zero line is at 717
var macdTips = [793,781,768,762,750,739,720,706,697,697,686,681,672,673,676,675,677,683,678,677,675,677,681,697,708,718,731,739,752,750,757,758,749,746,746,747,727,727,720,717,717,732,740,743,
745,750,748,752,756,750,746,742,736,730,725,722,720,718,712,708,702,698,696,698,704,710,716,722,730,738,744,748,745,738,735,730,728,725,722,720,722,724,726,728,
710,698,690,684,678,677,686,690,700,708,712,717,716,717,716,720,731,732,736,736,737,732,732,731,725,702,684,678,674,677,677,690,705,712,726,735,737,737,743,731,715,707,692,682,681,682,686,689,691,687,687,687,695,699,707,721,732,737,739,729,718,715,714,715,721,727,728,736,737,745,751,743,755,745,745,737,737,738,742,746,742,727,701,674];

var lines = {
  ma60: [19,153,40,148,67,142,97,137,133,128,160,122,180,115,200,113,233,114,267,118,300,123,333,132,367,138,400,147,433,150,480,161,530,190,590,225,650,260,710,280,760,306,780,312,823,327,857,340,873,345,900,350,940,354,1000,358,1067,367,1117,375,1143,380,1167,379],
  ma20: [19,119,33,128,50,142,67,153,90,157,113,154,133,150,147,138,167,118,187,103,207,99,227,98,260,108,287,113,320,137,350,153,383,165,407,183,433,207,467,227,480,235,520,270,545,290,590,313,610,313,640,316,683,327,713,333,740,345,767,364,797,365,817,368,837,375,857,381,870,381,900,370,927,375,943,373,967,363,1000,355,1020,352,1043,355,1067,360,1087,375,1107,386,1127,390,1140,403,1153,413,1167,412],
  ma10: [19,153,33,170,53,184,67,184,83,167,100,143,117,127,137,114,157,93,177,80,203,82,220,103,240,120,263,137,283,133,295,130,313,140,333,153,350,172,367,182,387,187,407,203,423,220,447,243,467,258,500,285,535,298,590,332,607,330,633,318,657,315,687,328,710,350,733,368,760,390,787,373,803,358,827,354,847,377,860,392,877,399,900,383,920,367,947,342,970,343,1000,356,1033,363,1070,367,1090,392,1113,410,1133,428,1147,437,1157,434,1167,423],
  ma5: [19,185,37,200,43,200,53,182,67,163,83,143,100,123,117,110,137,104,153,80,170,58,187,72,203,110,220,130,240,137,263,138,295,122,308,143,327,182,350,187,373,180,388,188,407,230,423,255,458,252,470,263,495,292,512,290,530,296,590,342,607,328,623,310,632,301,647,307,660,327,677,343,697,345,713,367,733,390,750,398,762,397,790,333,803,333,823,367,837,395,857,417,870,407,887,380,900,353,913,348,940,340,960,333,970,339,983,360,997,378,1003,377,1030,347,1050,363,1077,397,1093,417,1113,423,1127,427,1147,452,1153,450,1163,427,1167,411],
  volMa5: [19,581,33,575,43,578,53,576,67,567,87,555,100,553,115,535,130,528,143,532,155,542,170,542,187,552,200,558,217,564,233,567,260,570,275,559,300,558,310,570,590,593,610,585,632,576,641,576,657,583,677,595,689,595,713,588,760,589,776,565,797,552,815,568,835,581,859,589,883,586,898,573,918,575,934,585,958,576,985,575,1009,580,1031,576,1053,588,1092,599,1124,597,1147,595,1159,587,1167,572],
  volMa10: [19,569,33,575,47,579,63,572,77,571,93,563,113,543,133,542,150,537,170,537,187,547,207,552,230,564,263,567,273,563,310,563,590,593,618,586,645,580,673,587,705,590,760,590,780,577,807,566,829,565,839,574,859,583,883,585,902,580,934,577,985,578,1025,577,1045,582,1064,582,1100,595,1144,596,1159,591,1167,584],
  dif: [19,768,27,771,33,769,42,772,53,768,63,752,72,742,82,740,95,723,103,710,120,698,135,692,153,675,170,667,180,672,193,687,213,708,220,712,230,723,247,727,263,735,277,727,297,725,302,733,320,750,350,765,385,780,420,791,430,790,450,780,467,790,480,795,500,793,520,788,545,782,575,791,590,788,598,782,614,763,632,746,643,746,659,751,675,754,695,754,709,763,732,775,742,775,756,778,764,772,776,747,788,733,804,724,827,745,839,753,859,763,879,745,894,725,910,713,926,710,942,700,950,697,962,697,977,710,995,723,1013,713,1029,711,1053,722,1072,743,1092,756,1116,757,1132,767,1146,775,1155,763,1161,748,1167,734],
  dea: [19,731,33,745,47,755,63,758,83,748,107,733,123,718,143,703,163,687,180,682,193,682,213,692,243,708,267,721,273,724,297,725,310,732,320,736,360,750,400,765,440,775,470,785,497,793,517,790,550,782,590,788,602,785,622,772,647,757,677,754,695,754,732,767,762,773,804,743,825,739,867,753,879,752,906,733,936,717,966,705,1001,714,1041,713,1064,722,1100,743,1136,757,1155,763,1167,756]
};

function el(parent, tag, attrs, text) {
  var node = document.createElementNS(NS, tag);
  for (var k in attrs) node.setAttribute(k, attrs[k]);
  if (text !== undefined) node.textContent = text;
  parent.appendChild(node);
  return node;
}
function hLine(svg, y, x1, x2, stroke, dash) {
  var a = { d: 'M' + x1 + ' ' + (y + .5) + 'H' + x2, stroke: stroke, fill: 'none', 'shape-rendering': 'crispEdges' };
  if (dash) a['stroke-dasharray'] = dash;
  el(svg, 'path', a);
}
function curve(svg, pts, color, width) {
  var s = '';
  for (var i = 0; i < pts.length; i += 2) s += pts[i] + ',' + pts[i + 1] + ' ';
  el(svg, 'polyline', { points: s, fill: 'none', stroke: color, 'stroke-width': width, 'stroke-linejoin': 'round', 'shape-rendering': 'crispEdges' });
}
function axis(svg, y1, y2, majors, minors) {
  hLineV(svg, 1193, y1, y2);
  majors.forEach(function (m) {
    hLine(svg, m[0], 17, 1193, '#3c3c3c', '1 4');
    hLine(svg, m[0], 1193, 1199, '#555');
    if (m[1]) el(svg, 'text', { x: 1240, y: m[0] + 4, 'text-anchor': 'end', 'class': 'axis-text' }, m[1]);
  });
  minors.forEach(function (y) { hLine(svg, y, 1193, 1196, '#555'); });
}
function hLineV(svg, x, y1, y2) {
  el(svg, 'path', { d: 'M' + (x + .5) + ' ' + y1 + 'V' + y2, stroke: '#333', 'shape-rendering': 'crispEdges' });
}
function bars(svg, paths, color, fill) {
  el(svg, 'path', { d: paths, stroke: fill ? 'none' : color, fill: fill ? color : 'none', 'shape-rendering': 'crispEdges' });
}

/* price panel */
(function () {
  var svg = document.getElementById('price');
  var labels = ['2450','2400','2350','2300','2250','2200','2150','2100','2050','2000','1950'];
  var ys = [58,100,143,185,227,269,311,354,396,438,480];
  var minors = [79,122,164,206,248,290,333,375,417,459];
  axis(svg, 34, 492, ys.map(function (y, i) { return [y, labels[i]]; }), minors);

  var red = '', redFill = '', cyan = '', white = '';
  candles.forEach(function (c, i) {
    var x = xAt(i), top = c[1], bot = c[2], hi = c[3], lo = c[4];
    if (c[0] === 1) {
      cyan += 'M' + (x - 2) + ' ' + top + 'h5V' + (bot + 1) + 'h-5Z';
      cyan += 'M' + x + ' ' + hi + 'h1V' + (lo + 1) + 'h-1Z';
    } else if (c[0] === 2) {
      white += 'M' + (x - 2) + ' ' + top + 'h5v1h-5Z';
      white += 'M' + x + ' ' + hi + 'h1V' + (lo + 1) + 'h-1Z';
    } else {
      if (bot > top) red += 'M' + (x - 1.5) + ' ' + (top + .5) + 'h4V' + (bot + .5) + 'h-4Z';
      else redFill += 'M' + (x - 2) + ' ' + top + 'h5v1h-5Z';
      if (hi < top) redFill += 'M' + x + ' ' + hi + 'h1V' + top + 'h-1Z';
      if (lo > bot) redFill += 'M' + x + ' ' + bot + 'h1V' + (lo + 1) + 'h-1Z';
    }
  });
  bars(svg, cyan, CYAN, true);
  bars(svg, red, RED, false);
  bars(svg, redFill, RED, true);
  bars(svg, white, '#fff', true);

  curve(svg, lines.ma60, '#00f000', 1);
  curve(svg, lines.ma20, '#f000f0', 1);
  curve(svg, lines.ma10, '#ffff00', 1);
  curve(svg, lines.ma5, '#ffffff', 1);

  var marks = '';
  for (var x = 989; x < 1152; x += 4) marks += 'M' + x + ' 54l3 3M' + (x + 3) + ' 54l-3 3';
  el(svg, 'path', { d: marks, stroke: '#ff40d0', fill: 'none', 'stroke-width': 1.2 });
  el(svg, 'path', { d: 'M1172 39l4 4-4 4-4-4Z', stroke: '#4a4a4a', fill: 'none' });
  el(svg, 'path', { d: 'M1181.500 39.500h8v8h-8Z', stroke: '#4a4a4a', fill: 'none' });

  el(svg, 'text', { x: 170, y: 66, 'class': 'mark-text' }, '2453.73');
  el(svg, 'path', { d: 'M157 55l1-1h3M158 56l10 3', stroke: '#999', fill: 'none' });
  el(svg, 'text', { x: 1081, y: 477, 'class': 'mark-text' }, '1959.33');
  el(svg, 'path', { d: 'M1126 473.500H1145M1141 470l4 3.500-4 3', stroke: '#aaa', fill: 'none' });
}());

/* volume panel */
(function () {
  var svg = document.getElementById('vol');
  axis(svg, 493, 645, [[550,'10000'],[596,'5000']], [560,573,587,606,620,633]);
  el(svg, 'rect', { x: 1194.5, y: 628.5, width: 30, height: 14, fill: 'none', stroke: '#3a3a3a' });
  el(svg, 'text', { x: 1196, y: 639, 'class': 'axis-text' }, 'X100');
  var red = '', cyan = '';
  volumeTops.forEach(function (top, i) {
    var x = xAt(i);
    if (candles[i] && candles[i][0] === 0) red += 'M' + (x - 1.5) + ' ' + (top + .5) + 'h4V642.500h-4Z';
    else cyan += 'M' + (x - 2) + ' ' + top + 'h5V643h-5Z';
  });
  bars(svg, cyan, CYAN, true);
  bars(svg, red, RED, false);
  curve(svg, lines.volMa5, '#ffffff', 1);
  curve(svg, lines.volMa10, '#ffff00', 1.2);
}());

/* MACD panel */
(function () {
  var svg = document.getElementById('macd');
  axis(svg, 646, 797, [[687,'15.00'],[747,'-15.00']], [672,702,732,762]);
  el(svg, 'text', { x: 1240, y: 721, 'text-anchor': 'end', 'class': 'axis-text' }, '0.00');
  el(svg, 'rect', { x: 1193.5, y: 647.5, width: 49, height: 149, fill: 'none', stroke: '#333', 'stroke-width': 2 });
  var red = '', cyan = '';
  macdTips.forEach(function (tip, i) {
    var x = xAt(i);
    if (tip < 717) red += 'M' + x + ' ' + tip + 'h1V717h-1Z';
    else if (tip > 717) cyan += 'M' + x + ' 718h1V' + tip + 'h-1Z';
  });
  bars(svg, cyan, CYAN, true);
  bars(svg, red, RED, true);
  hLine(svg, 717, 17, 1193, '#d8d8d8', '1 2');
  curve(svg, lines.dif, '#ffffff', 1);
  curve(svg, lines.dea, '#ffff00', 1.2);
}());

/* date axis */
(function () {
  var svg = document.getElementById('dates');
  [[19,'2012年',0],[143,'5',1],[293,'6',1],[431,'7',1],[582,'8',1],[740,'9',1],[878,'10',1],[1002,'11',1],[1152,'12',1]].forEach(function (d) {
    if (d[2]) hLineV(svg, d[0], 798, 814);
    el(svg, 'text', { x: d[0] + (d[2] ? 2 : 0), y: 811, 'class': 'date-text' }, d[1]);
  });
  [180,218,255,328,363,397,470,507,544,622,662,701,775,810,845,909,940,970,1038,1072,1108,1188].forEach(function (x) {
    hLineV(svg, x, 798, 801);
  });
}());
```
